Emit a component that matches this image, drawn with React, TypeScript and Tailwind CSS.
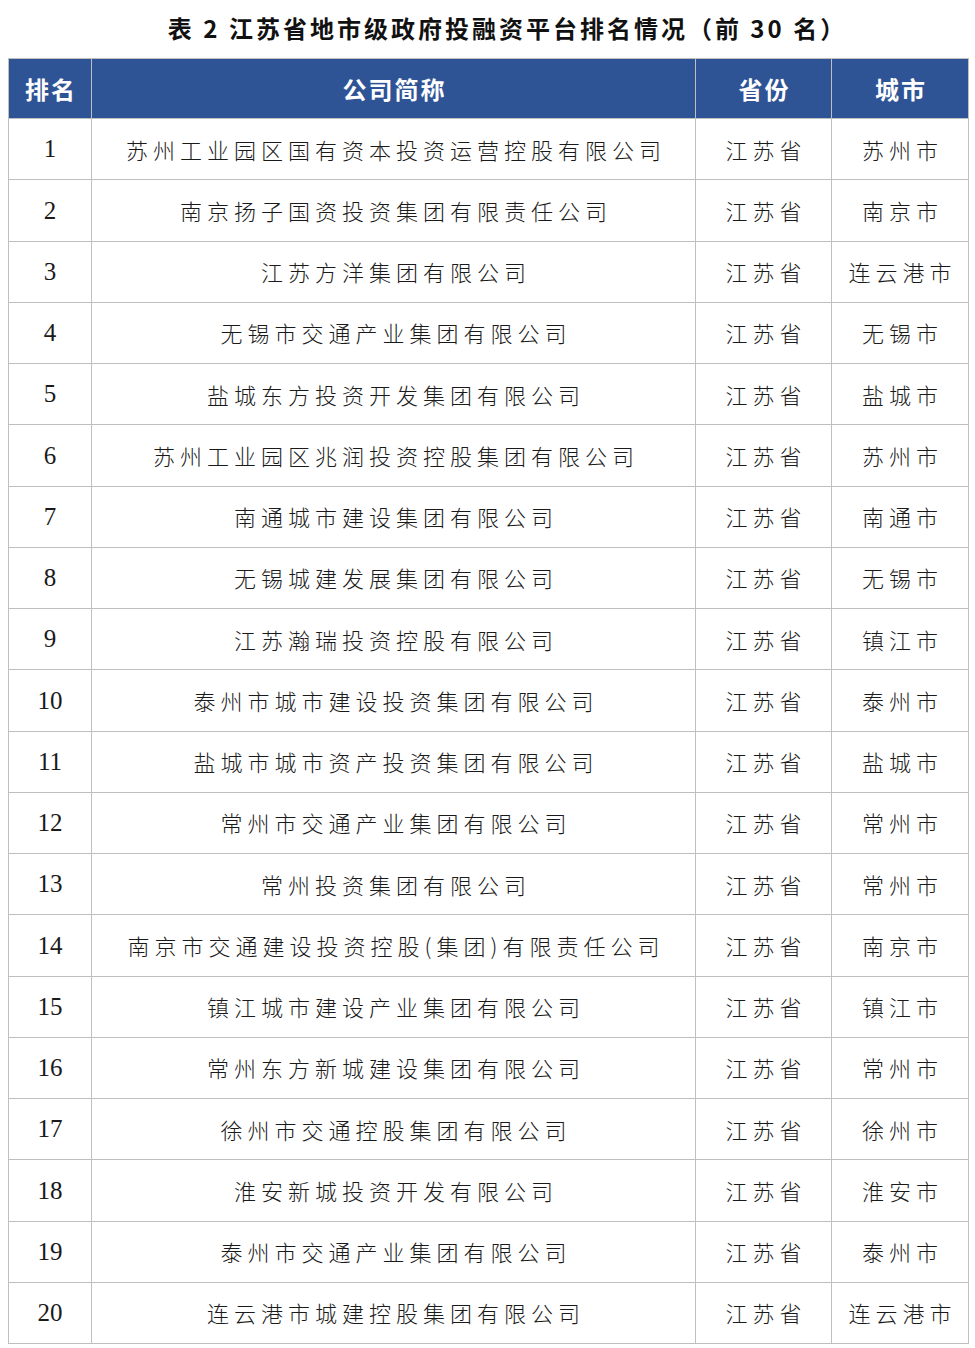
import React from 'react';

interface Row {
  rank: number;
  name: string;
  province: string;
  city: string;
}

const rows: Row[] = [
  { rank: 1, name: '苏州工业园区国有资本投资运营控股有限公司', province: '江苏省', city: '苏州市' },
  { rank: 2, name: '南京扬子国资投资集团有限责任公司', province: '江苏省', city: '南京市' },
  { rank: 3, name: '江苏方洋集团有限公司', province: '江苏省', city: '连云港市' },
  { rank: 4, name: '无锡市交通产业集团有限公司', province: '江苏省', city: '无锡市' },
  { rank: 5, name: '盐城东方投资开发集团有限公司', province: '江苏省', city: '盐城市' },
  { rank: 6, name: '苏州工业园区兆润投资控股集团有限公司', province: '江苏省', city: '苏州市' },
  { rank: 7, name: '南通城市建设集团有限公司', province: '江苏省', city: '南通市' },
  { rank: 8, name: '无锡城建发展集团有限公司', province: '江苏省', city: '无锡市' },
  { rank: 9, name: '江苏瀚瑞投资控股有限公司', province: '江苏省', city: '镇江市' },
  { rank: 10, name: '泰州市城市建设投资集团有限公司', province: '江苏省', city: '泰州市' },
  { rank: 11, name: '盐城市城市资产投资集团有限公司', province: '江苏省', city: '盐城市' },
  { rank: 12, name: '常州市交通产业集团有限公司', province: '江苏省', city: '常州市' },
  { rank: 13, name: '常州投资集团有限公司', province: '江苏省', city: '常州市' },
  { rank: 14, name: '南京市交通建设投资控股(集团)有限责任公司', province: '江苏省', city: '南京市' },
  { rank: 15, name: '镇江城市建设产业集团有限公司', province: '江苏省', city: '镇江市' },
  { rank: 16, name: '常州东方新城建设集团有限公司', province: '江苏省', city: '常州市' },
  { rank: 17, name: '徐州市交通控股集团有限公司', province: '江苏省', city: '徐州市' },
  { rank: 18, name: '淮安新城投资开发有限公司', province: '江苏省', city: '淮安市' },
  { rank: 19, name: '泰州市交通产业集团有限公司', province: '江苏省', city: '泰州市' },
  { rank: 20, name: '连云港市城建控股集团有限公司', province: '江苏省', city: '连云港市' },
];

const cjk = "font-['Noto_Sans_CJK_SC',sans-serif]";
const cell = `${cjk} border border-[#bfbfbf] text-center align-middle text-[22px] font-light tracking-[5px] pl-[5px] text-[#1a1a1a]`;

export default function App() {
  return (
    <div className="w-[975px] min-h-[1348px] bg-white">
      {/* Title */}
      <h1
        className={`${cjk} h-[58px] flex items-center justify-center pl-[40px] pb-[3px] text-[24px] font-bold tracking-[3px] text-[#111]`}
      >
        表 2 江苏省地市级政府投融资平台排名情况（前 30 名）
      </h1>

      <table className="ml-[8px] w-[960px] border-collapse table-fixed">
        <colgroup>
          <col className="w-[83px]" />
          <col className="w-[604px]" />
          <col className="w-[136px]" />
          <col className="w-[137px]" />
        </colgroup>
        <thead>
          <tr className="h-[60px] bg-[#2f5496]">
            {['排名', '公司简称', '省份', '城市'].map((h) => (
              <th
                key={h}
                className={`${cjk} border border-[#bfbfbf] text-center align-middle text-[24px] font-bold text-white tracking-[2px] pl-[2px]`}
              >
                {h}
              </th>
            ))}
          </tr>
        </thead>
        <tbody>
          {rows.map((r) => (
            <tr key={r.rank} className="h-[61.25px]">
              <td className="border border-[#bfbfbf] text-center align-middle font-['Liberation_Serif',serif] text-[25px] text-[#1a1a1a]">
                {r.rank}
              </td>
              <td className={cell}>{r.name}</td>
              <td className={cell}>{r.province}</td>
              <td className={cell}>{r.city}</td>
            </tr>
          ))}
        </tbody>
      </table>
    </div>
  );
}
